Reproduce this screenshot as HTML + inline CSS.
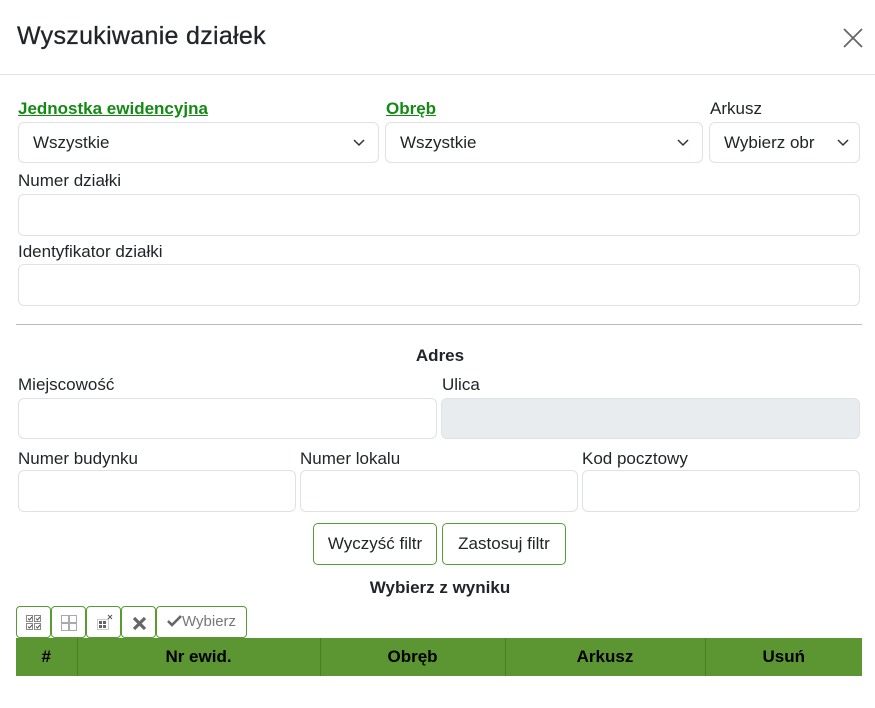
<!DOCTYPE html>
<html><head><meta charset="utf-8"><style>
*{box-sizing:border-box;margin:0;padding:0}
body{width:875px;height:708px;background:#fff;font-family:"Liberation Sans",sans-serif;color:#212529;position:relative;overflow:hidden;font-size:17px}
.a{position:absolute;white-space:nowrap}
.lbl{font-size:17px;color:#212529}
.g{color:#148a14;font-weight:bold;text-decoration:underline}
.in{position:absolute;border:1px solid #dee2e6;border-radius:6px;background:#fff}
.sel{padding-left:14px;line-height:39px;font-size:17px}
.chev{position:absolute;right:13px;top:15px}
.btn{position:absolute;border:1px solid #5a9a32;border-radius:5px;background:#fff;text-align:center;font-size:17px;line-height:40px}
.tb{position:absolute;top:606px;height:32px;border:1px solid #5a9a32;border-radius:4px;background:#fff}
th{font-weight:bold;font-size:17px}
</style></head><body>
<div class="a" style="left:17px;top:22px;font-size:25px;letter-spacing:0.3px;-webkit-text-stroke:0.3px #212529">Wyszukiwanie działek</div>
<svg class="a" style="left:843px;top:28px" width="20" height="20"><path d="M1 1L19 19M19 1L1 19" stroke="#666" stroke-width="1.8"/></svg>
<div class="a" style="left:0;top:74px;width:875px;height:1px;background:#dee2e6"></div>

<div class="a g" style="left:18px;top:99px">Jednostka ewidencyjna</div>
<div class="a g" style="left:386px;top:99px">Obręb</div>
<div class="a lbl" style="left:710px;top:99px">Arkusz</div>
<div class="in sel" style="left:18px;top:122px;width:361px;height:41px">Wszystkie<svg class="chev" width="12" height="9"><path d="M1 2L6 7L11 2" fill="none" stroke="#333" stroke-width="1.5"/></svg></div>
<div class="in sel" style="left:385px;top:122px;width:318px;height:41px">Wszystkie<svg class="chev" width="12" height="9"><path d="M1 2L6 7L11 2" fill="none" stroke="#333" stroke-width="1.5"/></svg></div>
<div class="in sel" style="left:709px;top:122px;width:151px;height:41px">Wybierz obr<svg class="chev" style="right:10px" width="12" height="9"><path d="M1 2L6 7L11 2" fill="none" stroke="#333" stroke-width="1.5"/></svg></div>

<div class="a lbl" style="left:18px;top:171px">Numer działki</div>
<div class="in" style="left:18px;top:194px;width:842px;height:42px"></div>
<div class="a lbl" style="left:18px;top:242px">Identyfikator działki</div>
<div class="in" style="left:18px;top:264px;width:842px;height:42px"></div>
<div class="a" style="left:16px;top:324px;width:846px;height:1px;background:#bbb"></div>

<div class="a" style="left:0;width:880px;text-align:center;top:346px;font-weight:bold">Adres</div>
<div class="a lbl" style="left:18px;top:375px">Miejscowość</div>
<div class="a lbl" style="left:442px;top:375px">Ulica</div>
<div class="in" style="left:18px;top:398px;width:419px;height:41px"></div>
<div class="in" style="left:441px;top:398px;width:419px;height:41px;background:#e9ecef"></div>

<div class="a lbl" style="left:18px;top:449px">Numer budynku</div>
<div class="a lbl" style="left:300px;top:449px">Numer lokalu</div>
<div class="a lbl" style="left:582px;top:449px">Kod pocztowy</div>
<div class="in" style="left:18px;top:470px;width:278px;height:42px"></div>
<div class="in" style="left:300px;top:470px;width:278px;height:42px"></div>
<div class="in" style="left:582px;top:470px;width:278px;height:42px"></div>

<div class="btn" style="left:313px;top:523px;width:124px;height:42px">Wyczyść filtr</div>
<div class="btn" style="left:442px;top:523px;width:124px;height:42px">Zastosuj filtr</div>

<div class="a" style="left:0;width:880px;text-align:center;top:578px;font-weight:bold">Wybierz z wyniku</div>

<div class="tb" style="left:16px;width:35px"><svg style="position:absolute;left:9px;top:8px" width="16" height="16"><g fill="none" stroke="#888" stroke-width="1"><rect x="0.5" y="0.5" width="6" height="6"/><rect x="8.5" y="0.5" width="6" height="6"/><rect x="0.5" y="8.5" width="6" height="6"/><rect x="8.5" y="8.5" width="6" height="6"/><path d="M2 3.5l1.5 1.5 2.5-3M10 3.5l1.5 1.5 2.5-3M2 11.5l1.5 1.5 2.5-3M10 11.5l1.5 1.5 2.5-3" stroke="#555"/></g></svg></div>
<div class="tb" style="left:51px;width:35px"><svg style="position:absolute;left:9px;top:8px" width="16" height="16"><g fill="none" stroke="#aaa"><rect x="0.5" y="0.5" width="7" height="7"/><rect x="8.5" y="0.5" width="7" height="7"/><rect x="0.5" y="8.5" width="7" height="7"/><rect x="8.5" y="8.5" width="7" height="7"/></g></svg></div>
<div class="tb" style="left:86px;width:35px"><svg style="position:absolute;left:9px;top:7px" width="18" height="18"><g fill="#666"><rect x="3" y="7" width="3" height="3"/><rect x="7" y="7" width="3" height="3"/><rect x="3" y="11" width="3" height="3"/><rect x="7" y="11" width="3" height="3"/></g><rect x="1.5" y="5.5" width="11" height="10" fill="none" stroke="#999" stroke-dasharray="1 1"/><path d="M12 1l4 4M16 1l-4 4" stroke="#555"/></svg></div>
<div class="tb" style="left:121px;width:35px"><svg style="position:absolute;left:10px;top:9px" width="15" height="15"><path d="M2 2L13 13M13 2L2 13" stroke="#666" stroke-width="3.2"/></svg></div>
<div class="tb" style="left:156px;width:91px;color:#777;font-size:15px;line-height:30px;padding-left:10px"><svg width="15" height="12" style="vertical-align:-1px"><path d="M1 6l4 4 9-9" fill="none" stroke="#666" stroke-width="2.6"/></svg>Wybierz</div>

<table class="a" style="left:16px;top:638px;width:846px;height:38px;border-collapse:collapse;background:#5b9632;color:#000">
<tr>
<th style="width:61px;border-right:1px solid #4a7d28">#</th>
<th style="width:243px;border-right:1px solid #4a7d28">Nr ewid.</th>
<th style="width:185px;border-right:1px solid #4a7d28">Obręb</th>
<th style="width:200px;border-right:1px solid #4a7d28">Arkusz</th>
<th>Usuń</th>
</tr></table>
</body></html>
